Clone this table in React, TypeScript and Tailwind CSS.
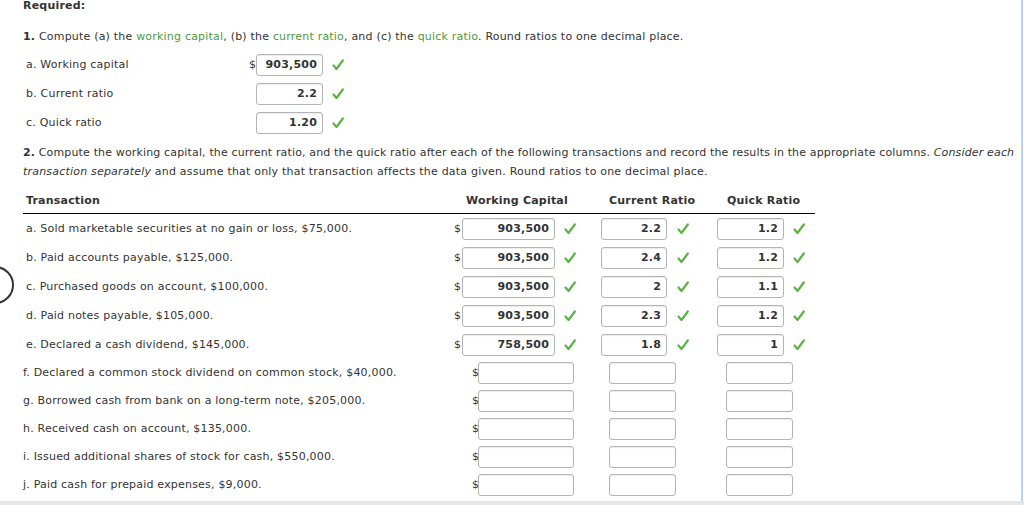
import React from "react";

const Check = () => (
  <svg width="12" height="12" viewBox="0 0 12 12" className="shrink-0">
    <path d="M1.5 6.5 L4.5 10 L10.8 1.5" fill="none" stroke="#5cb247" strokeWidth="2.2" strokeLinecap="round" strokeLinejoin="round" />
  </svg>
);

const Box = ({ value, w }: { value?: string; w: string }) => (
  <div
    className={`${w} h-[22px] border border-[#b4b4b4] rounded-[3px] bg-white flex items-center justify-end pr-[5px] font-bold text-[#333] shadow-[inset_0_1px_1px_rgba(0,0,0,0.08)]`}
  >
    {value}
  </div>
);

const filled = [
  ["a. Sold marketable securities at no gain or loss, $75,000.", "903,500", "2.2", "1.2"],
  ["b. Paid accounts payable, $125,000.", "903,500", "2.4", "1.2"],
  ["c. Purchased goods on account, $100,000.", "903,500", "2", "1.1"],
  ["d. Paid notes payable, $105,000.", "903,500", "2.3", "1.2"],
  ["e. Declared a cash dividend, $145,000.", "758,500", "1.8", "1"],
];

const empty = [
  "f. Declared a common stock dividend on common stock, $40,000.",
  "g. Borrowed cash from bank on a long-term note, $205,000.",
  "h. Received cash on account, $135,000.",
  "i. Issued additional shares of stock for cash, $550,000.",
  "j. Paid cash for prepaid expenses, $9,000.",
];

export default function App() {
  return (
    <div
      className="relative w-[1024px] h-[505px] overflow-hidden bg-white text-[#333] text-[11px] leading-[14px] tracking-[0.2px]"
      style={{ fontFamily: "Verdana, 'DejaVu Sans', sans-serif" }}
    >
      <div className="absolute left-[-24px] top-[266px] w-[38px] h-[38px] rounded-full border-[2.5px] border-[#333]" />
      <div className="absolute right-[1px] top-0 w-[2px] h-[505px] bg-[#b9d3ee]" />

      <div className="pl-[23px] pr-[8px]">
        <div className="font-bold h-[11px] leading-[11px]">Required:</div>

        <div className="mt-[19px] whitespace-nowrap">
          <span className="font-bold">1.</span> Compute (a) the{" "}
          <span className="text-[#4f9a3c]">working capital</span>, (b) the{" "}
          <span className="text-[#4f9a3c]">current ratio</span>, and (c) the{" "}
          <span className="text-[#4f9a3c]">quick ratio</span>. Round ratios to one decimal place.
        </div>

        <div className="mt-[6px] flex flex-col">
          {[
            ["a. Working capital", "903,500", true],
            ["b. Current ratio", "2.2", false],
            ["c. Quick ratio", "1.20", false],
          ].map(([label, v, dollar], i) => (
            <div key={i} className="h-[29px] flex items-center">
              <div className="w-[226px] pl-[3px]">{label as string}</div>
              <div className="w-[7px]">{dollar ? "$" : ""}</div>
              <Box value={v as string} w="w-[67px]" />
              <div className="ml-[9px]">
                <Check />
              </div>
            </div>
          ))}
        </div>

        <div className="mt-[6px] leading-[19px]">
          <div className="whitespace-nowrap tracking-[0.15px]">
            <span className="font-bold">2.</span> Compute the working capital, the current ratio, and the quick ratio after each of the following transactions and record the results in the appropriate columns. <i>Consider each</i>
          </div>
          <div className="whitespace-nowrap">
            <i>transaction separately</i> and assume that only that transaction affects the data given. Round ratios to one decimal place.
          </div>
        </div>

        <div className="w-[792px] mt-[9px]">
          <div className="h-[24px] pt-[4px] flex items-start font-bold border-b border-black">
            <div className="w-[443px] pl-[3px]">Transaction</div>
            <div className="w-[143px]">Working Capital</div>
            <div className="w-[118px]">Current Ratio</div>
            <div>Quick Ratio</div>
          </div>

          <div>
            {filled.map(([t, wc, cr, qr], i) => (
              <div key={i} className="h-[29px] flex items-center">
                <div className="w-[427px] pl-[3px] whitespace-nowrap">{t}</div>
                <div className="w-[150px] flex items-center">
                  <span className="ml-[4px] w-[8px]">$</span>
                  <Box value={wc} w="w-[93px]" />
                  <div className="ml-[9px]">
                    <Check />
                  </div>
                </div>
                <div className="w-[116px] flex items-center">
                  <div className="ml-[1px]">
                    <Box value={cr} w="w-[66px]" />
                  </div>
                  <div className="ml-[10px]">
                    <Check />
                  </div>
                </div>
                <div className="flex items-center">
                  <div className="ml-[1px]">
                    <Box value={qr} w="w-[67px]" />
                  </div>
                  <div className="ml-[9px]">
                    <Check />
                  </div>
                </div>
              </div>
            ))}
            {empty.map((t, i) => (
              <div key={i} className="h-[28px] flex items-center">
                <div className="w-[427px] whitespace-nowrap">{t}</div>
                <div className="w-[150px] flex items-center">
                  <span className="ml-[22px] w-[6px]">$</span>
                  <Box w="w-[96px]" />
                </div>
                <div className="w-[116px] flex items-center">
                  <div className="ml-[9px]">
                    <Box w="w-[67px]" />
                  </div>
                </div>
                <div className="flex items-center">
                  <div className="ml-[10px]">
                    <Box w="w-[67px]" />
                  </div>
                </div>
              </div>
            ))}
          </div>
        </div>
      </div>

      <div className="absolute left-0 bottom-0 w-[1024px] h-[4px] bg-[#e6e6e6]" />
    </div>
  );
}
